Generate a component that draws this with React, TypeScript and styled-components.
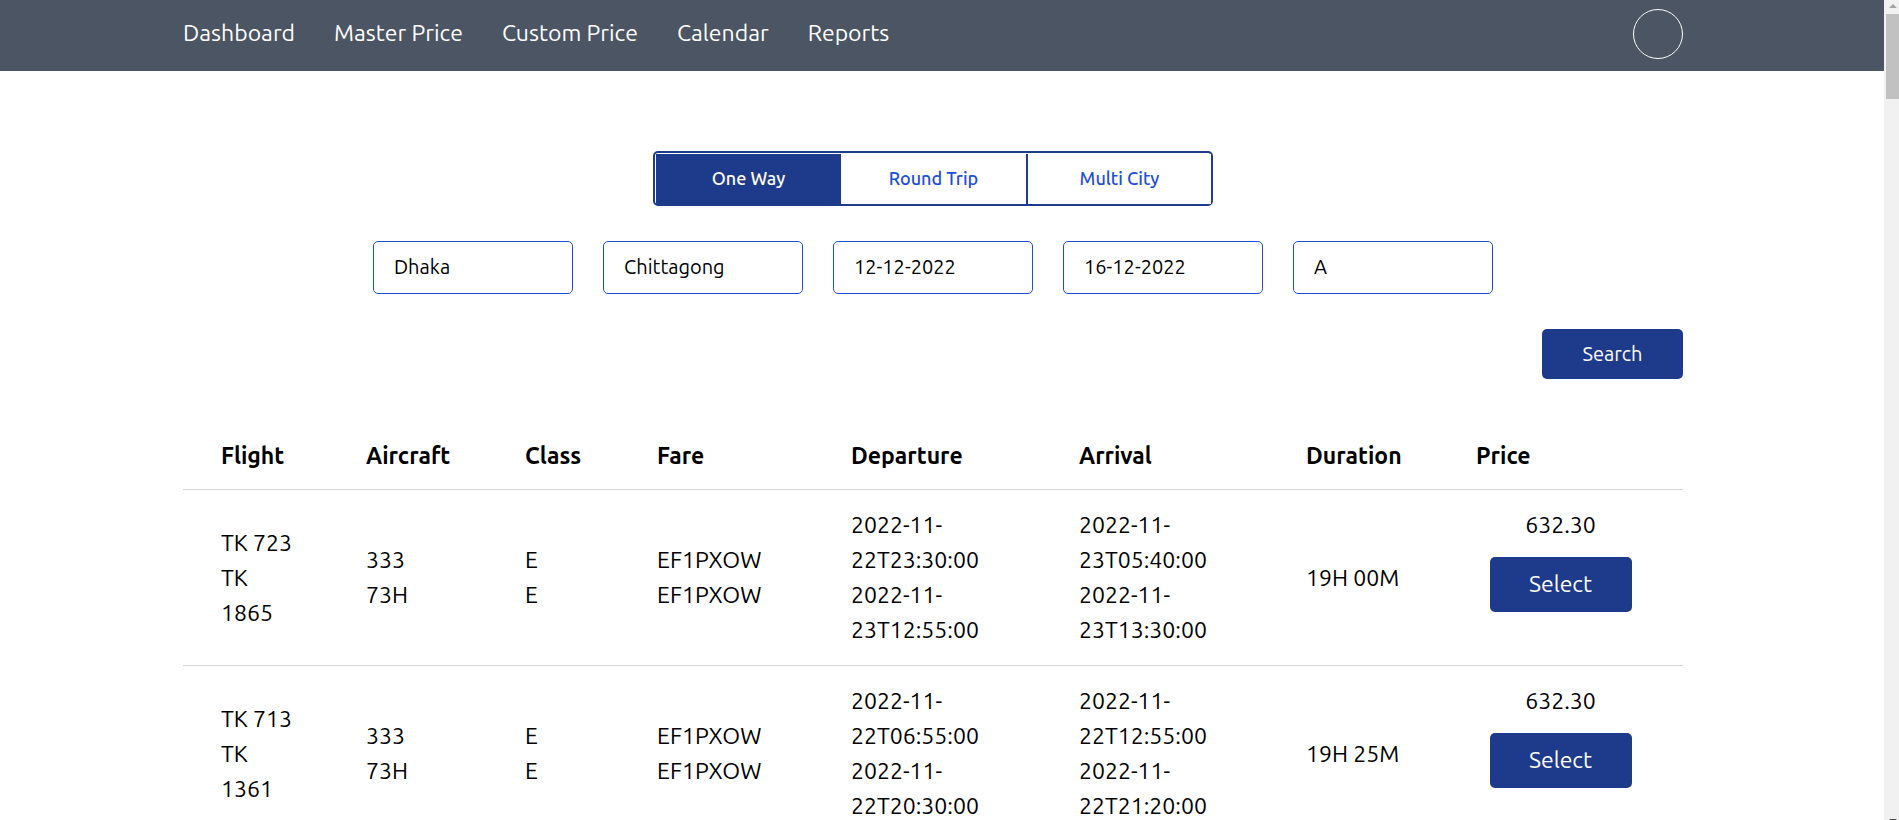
import React, { useState } from "react";
import styled, { createGlobalStyle } from "styled-components";

const GlobalStyle = createGlobalStyle`
  *, *::before, *::after { box-sizing: border-box; }
  body {
    margin: 0;
    background: #fff;
    color: #000;
    font-family: "Ubuntu", "Noto Sans", sans-serif;
    font-size: 23px;
    line-height: 35px;
  }
  button, input { font-family: inherit; }
`;

const Viewport = styled.div`
  display: flex;
  height: 100vh;
  overflow: hidden;
`;

const Page = styled.div`
  flex: 1;
  min-width: 0;
  overflow: hidden;
`;

const Container = styled.div`
  width: 100%;
  max-width: 1518px;
  margin: 0 auto;
  padding-right: 18px;
`;

const Header = styled.header`
  background: #4b5563;
  padding: 9px 0 12px;
`;

const HeaderInner = styled(Container)`
  display: flex;
  justify-content: space-between;
  align-items: flex-start;
`;

const Nav = styled.nav`
  display: flex;
  gap: 39px;
  padding-top: 6px;
`;

const NavLink = styled.a`
  color: #fff;
  text-decoration: none;
`;

const Avatar = styled.button`
  width: 50px;
  height: 50px;
  padding: 0;
  border: 1px solid #fff;
  border-radius: 50%;
  background: transparent;
`;

const Main = styled(Container).attrs({ as: "main" })`
  padding-top: 80px;
`;

const SearchForm = styled.form`
  display: flex;
  flex-direction: column;
  align-items: center;
  gap: 35px;
`;

const Tabs = styled.div`
  display: grid;
  grid-template-columns: repeat(3, 1fr);
  width: 560px;
  height: 55px;
  padding: 1px 0 0 1px;
  border: 2px solid #1e3a8a;
  border-radius: 5px;
`;

const Tab = styled.button<{ $active: boolean }>`
  border: 0;
  padding: 0 0 3px;
  background: ${(p) => (p.$active ? "#1e3a8a" : "#fff")};
  color: ${(p) => (p.$active ? "#fff" : "#1d4ed8")};
  font-size: 18px;
  font-weight: 500;

  &:last-child {
    border-left: 2px solid #1e3a8a;
  }
`;

const Fields = styled.div`
  display: flex;
  flex-wrap: wrap;
  justify-content: center;
  gap: 30px;
`;

const Field = styled.input`
  width: 200px;
  height: 53px;
  padding: 0 20px 2px;
  border: 1px solid #1d4ed8;
  border-radius: 5px;
  background: #fff;
  color: #000;
  font-size: 20px;
`;

const Button = styled.button<{ $large?: boolean }>`
  min-width: ${(p) => (p.$large ? 142 : 141)}px;
  height: ${(p) => (p.$large ? 55 : 50)}px;
  padding: 0 20px 2px;
  border: 0;
  border-radius: 5px;
  background: #1e3a8a;
  color: #fff;
  font-size: ${(p) => (p.$large ? 23 : 20)}px;
`;

const SubmitRow = styled.div`
  display: flex;
  justify-content: flex-end;
  width: 100%;
`;

const Table = styled.table`
  width: 100%;
  margin-top: 43px;
  table-layout: fixed;
  border-collapse: collapse;
`;

const Row = styled.tr`
  border-bottom: 1px solid #d1d5db;
`;

const HeadCell = styled.th`
  padding: 16px 20px 16px 38px;
  text-align: left;
  font-weight: 700;
`;

const Cell = styled.td`
  padding: 17px 34px 18px 38px;
`;

const PriceCell = styled.td`
  padding: 17px 0 18px;
  text-align: center;
  vertical-align: top;
`;

const Price = styled.div`
  margin-bottom: 15px;
`;

const Scrollbar = styled.div`
  display: flex;
  flex-direction: column;
  align-items: flex-end;
  justify-content: space-between;
  width: 15px;
  background: #f1f1f1;
`;

const Thumb = styled.div`
  width: 13px;
  height: 85px;
  margin-bottom: auto;
  background: #c1c1c1;
`;

const Arrow = styled.svg`
  display: block;
  width: 13px;
  height: 14px;
`;

const DownArrow = styled(Arrow)`
  height: 2px;
`;

const columns = [
  { name: "Flight", width: 145 },
  { name: "Aircraft", width: 159 },
  { name: "Class", width: 132 },
  { name: "Fare", width: 194 },
  { name: "Departure", width: 228 },
  { name: "Arrival", width: 227 },
  { name: "Duration", width: 170 },
  { name: "Price", width: 245 },
];

const Column = styled.col<{ $width: number }>`
  width: ${(p) => p.$width}px;
`;

const flights = [
  {
    segments: [
      ["TK 723", "333", "E", "EF1PXOW", "2022-11-22T23:30:00", "2022-11-23T05:40:00"],
      ["TK 1865", "73H", "E", "EF1PXOW", "2022-11-23T12:55:00", "2022-11-23T13:30:00"],
    ],
    duration: "19H 00M",
    price: "632.30",
  },
  {
    segments: [
      ["TK 713", "333", "E", "EF1PXOW", "2022-11-22T06:55:00", "2022-11-22T12:55:00"],
      ["TK 1361", "73H", "E", "EF1PXOW", "2022-11-22T20:30:00", "2022-11-22T21:20:00"],
    ],
    duration: "19H 25M",
    price: "632.30",
  },
];

const links = ["Dashboard", "Master Price", "Custom Price", "Calendar", "Reports"];
const tripTypes = ["One Way", "Round Trip", "Multi City"];
const fields = [
  { label: "From", value: "Dhaka" },
  { label: "To", value: "Chittagong" },
  { label: "Departure date", value: "12-12-2022" },
  { label: "Return date", value: "16-12-2022" },
  { label: "Class", value: "A" },
];

export default function App() {
  const [trip, setTrip] = useState(tripTypes[0]);

  return (
    <>
      <GlobalStyle />
      <Viewport>
        <Page>
          <Header>
            <HeaderInner>
              <Nav>
                {links.map((link) => (
                  <NavLink key={link} href="#">{link}</NavLink>
                ))}
              </Nav>
              <Avatar type="button" aria-label="Account" />
            </HeaderInner>
          </Header>
          <Main>
            <SearchForm onSubmit={(e) => e.preventDefault()}>
              <Tabs>
                {tripTypes.map((type) => (
                  <Tab
                    key={type}
                    type="button"
                    $active={type === trip}
                    aria-pressed={type === trip}
                    onClick={() => setTrip(type)}
                  >
                    {type}
                  </Tab>
                ))}
              </Tabs>
              <Fields>
                {fields.map((f) => (
                  <Field key={f.label} aria-label={f.label} defaultValue={f.value} />
                ))}
              </Fields>
              <SubmitRow>
                <Button type="submit">Search</Button>
              </SubmitRow>
            </SearchForm>
            <Table>
              <colgroup>
                {columns.map((c) => (
                  <Column key={c.name} $width={c.width} />
                ))}
              </colgroup>
              <thead>
                <Row>
                  {columns.map((c) => (
                    <HeadCell key={c.name} scope="col">{c.name}</HeadCell>
                  ))}
                </Row>
              </thead>
              <tbody>
                {flights.map((flight) => (
                  <Row key={flight.segments[0][0]}>
                    {flight.segments[0].map((_, i) => (
                      <Cell key={i}>
                        {flight.segments.map((segment) => (
                          <div key={segment[0]}>{segment[i]}</div>
                        ))}
                      </Cell>
                    ))}
                    <Cell>{flight.duration}</Cell>
                    <PriceCell>
                      <Price>{flight.price}</Price>
                      <Button type="button" $large>Select</Button>
                    </PriceCell>
                  </Row>
                ))}
              </tbody>
            </Table>
          </Main>
        </Page>
        <Scrollbar aria-hidden="true">
          <Arrow viewBox="0 0 13 14">
            <path d="M3 8 L7 4 L11 8 Z" fill="#a3a3a3" />
          </Arrow>
          <Thumb />
          <DownArrow viewBox="0 0 13 2">
            <path d="M3 1 H11 L10 2 H4 Z" fill="#505050" />
          </DownArrow>
        </Scrollbar>
      </Viewport>
    </>
  );
}
